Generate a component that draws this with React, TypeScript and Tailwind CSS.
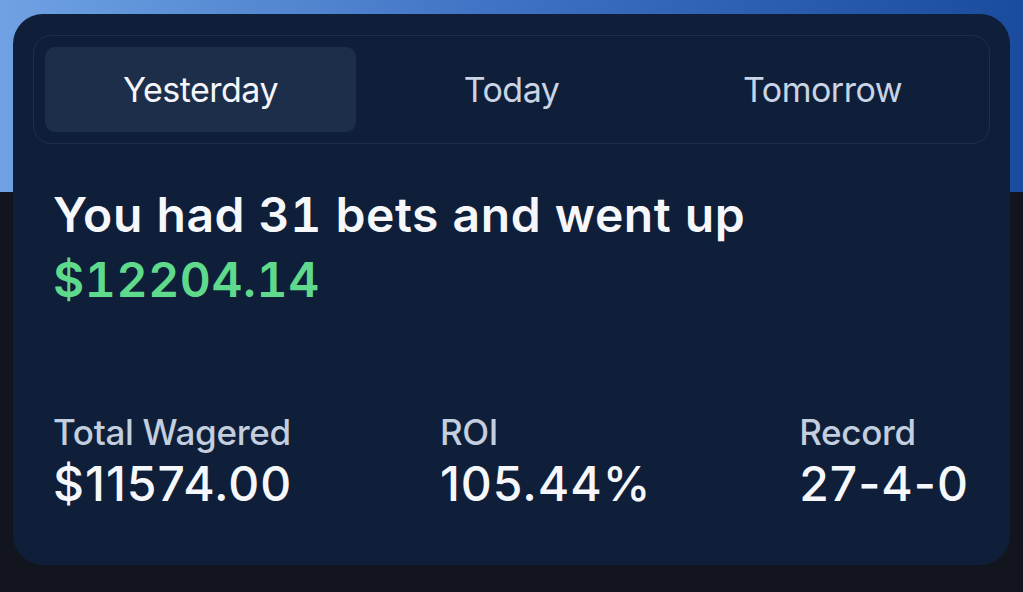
import { useState } from 'react';

const tabs = ['Yesterday', 'Today', 'Tomorrow'];

const stats = [
  { label: 'Total Wagered', value: '$11574.00' },
  { label: 'ROI', value: '105.44%' },
  { label: 'Record', value: '27-4-0' },
];

export default function App() {
  const [active, setActive] = useState(0);

  return (
    <div
      className="w-[1023px] h-[592px] overflow-hidden bg-[#12151d] bg-[linear-gradient(to_bottom,transparent_192px,#12151d_192px),linear-gradient(to_right,#6fa1e3,#3a6cc0_55%,#1b4b9d)] pt-[14px] px-[13px]"
      style={{ fontFamily: 'Inter, "Noto Sans", sans-serif' }}
    >
      <div className="h-[551px] rounded-[30px] bg-[#0f1f3a] pt-[21px]">
        {/* tab switcher */}
        <div className="mx-[20px] h-[109px] rounded-[18px] border border-[#1f3049] p-[11px] grid grid-cols-3">
          {tabs.map((t, i) => (
            <button
              key={t}
              onClick={() => setActive(i)}
              className={`rounded-[10px] text-[34px] tracking-[-0.5px] ${
                active === i ? 'bg-[#1d2e4a] text-[#f4f6fa]' : 'text-[#c9d4e4]'
              }`}
            >
              {t}
            </button>
          ))}
        </div>

        <div className="pl-[40px] pr-[41px] pt-[38px]">
          <p className="text-[48px] leading-[65px] font-semibold tracking-[0.6px] text-[#f5f7fa] tabular-nums">
            You had 31 bets and went up
          </p>
          <p className="text-[48px] leading-[65px] font-semibold tracking-[0.6px] text-[#5fda8c] tabular-nums">
            $12204.14
          </p>

          <div className="mt-[99px] flex justify-between">
            {stats.map((s) => (
              <div key={s.label}>
                <p className="text-[35px] leading-[42px] font-medium tracking-[-0.3px] text-[#c3cedf]">{s.label}</p>
                <p className="mt-[5px] text-[48px] leading-[52px] font-medium tracking-[1px] text-[#f5f7fa]">{s.value}</p>
              </div>
            ))}
          </div>
        </div>
      </div>
    </div>
  );
}
